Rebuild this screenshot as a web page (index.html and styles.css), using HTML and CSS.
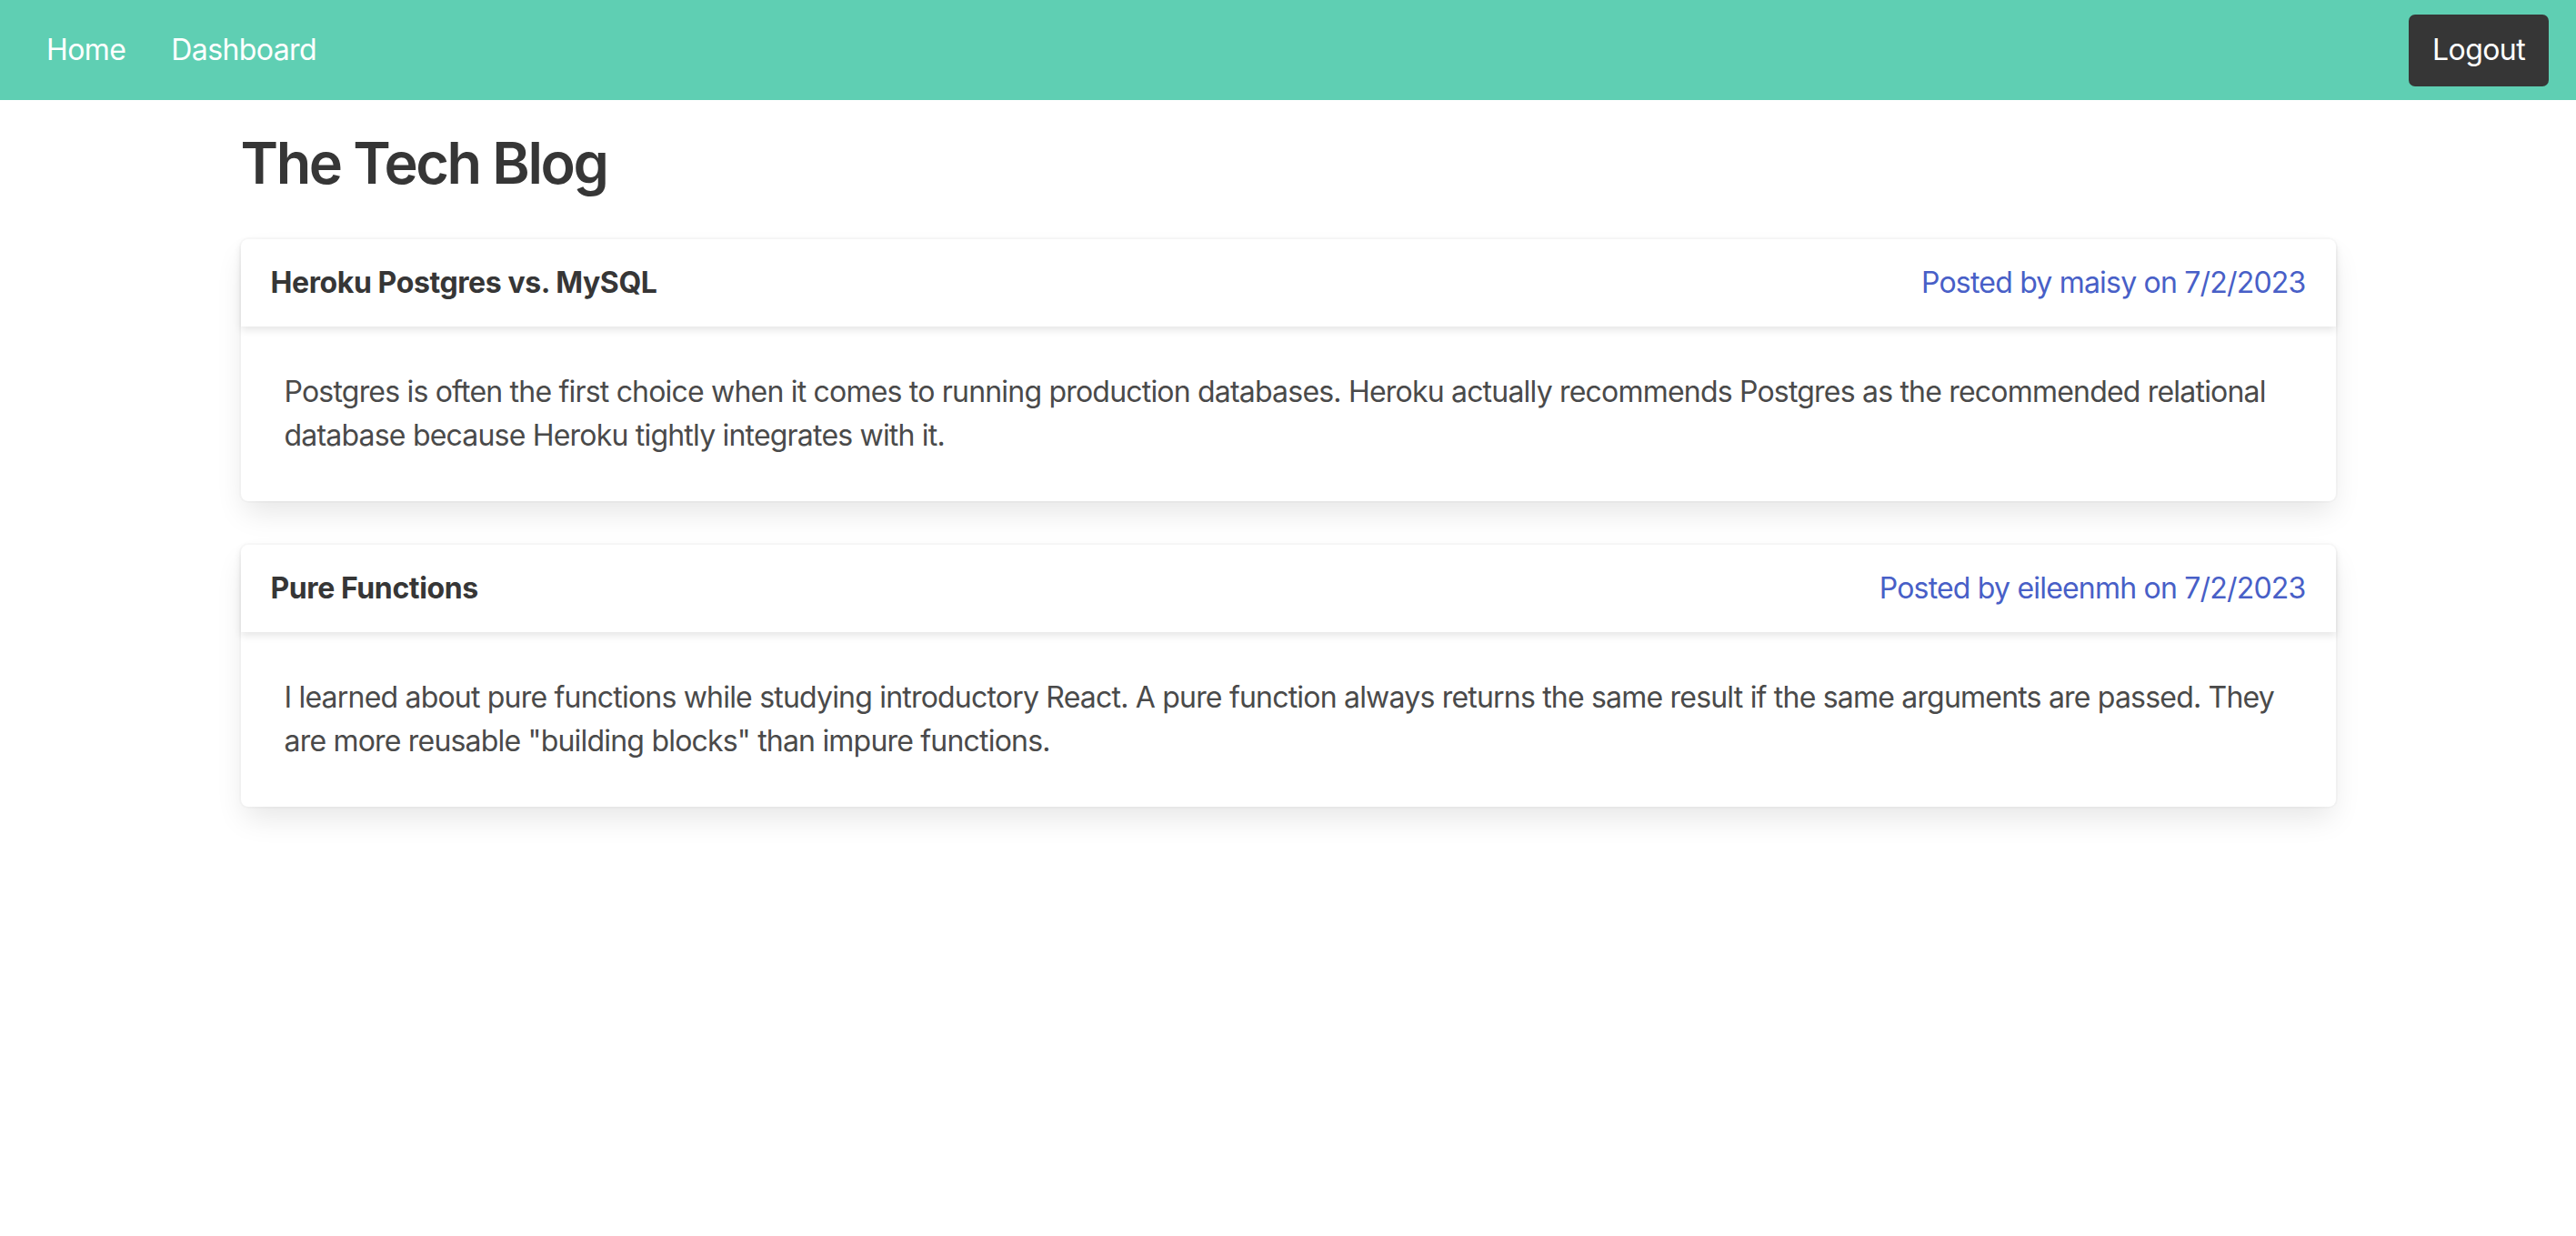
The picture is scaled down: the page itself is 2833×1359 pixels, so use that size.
FILE: index.html
```html
<!DOCTYPE html>
<html lang="en">
<head>
<meta charset="utf-8">
<title>The Tech Blog</title>
<link rel="stylesheet" href="styles.css">
</head>
<body>
<nav class="navbar">
  <div class="nav-start">
    <a class="nav-item" href="#">Home</a>
    <a class="nav-item" href="#">Dashboard</a>
  </div>
  <div class="nav-end">
    <button class="btn-dark" type="button">Logout</button>
  </div>
</nav>
<main class="container">
  <h1 class="title">The Tech Blog</h1>
  <article class="card">
    <header class="card-header">
      <p class="card-title">Heroku Postgres vs. MySQL</p>
      <p class="card-meta">Posted by maisy on 7/2/2023</p>
    </header>
    <div class="card-content">
      <p>Postgres is often the first choice when it comes to running production databases. Heroku actually recommends Postgres as the recommended relational database because Heroku tightly integrates with it.</p>
    </div>
  </article>
  <article class="card">
    <header class="card-header">
      <p class="card-title">Pure Functions</p>
      <p class="card-meta">Posted by eileenmh on 7/2/2023</p>
    </header>
    <div class="card-content">
      <p>I learned about pure functions while studying introductory React. A pure function always returns the same result if the same arguments are passed. They are more reusable "building blocks" than impure functions.</p>
    </div>
  </article>
</main>
</body>
</html>
```

FILE: styles.css
```css
* { box-sizing: border-box; }
html, body { margin: 0; padding: 0; }
body {
  font-family: Inter, "Noto Sans", "Liberation Sans", sans-serif;
  font-size: 32px;
  line-height: 1.5;
  color: #4a4a4a;
  background: #ffffff;
}
p { margin: 0; }

.navbar {
  height: 110px;
  background: #5fcfb3;
  display: flex;
  align-items: center;
  justify-content: space-between;
  padding: 0 30px 0 51px;
}
.nav-start { display: flex; align-items: center; }
.nav-item {
  color: #ffffff;
  text-decoration: none;
  padding: 0 25px;
  font-size: 32px;
  letter-spacing: -0.6px;
}
.nav-item:first-child { padding-left: 0; }
.btn-dark {
  font-family: inherit;
  font-size: 32px;
  letter-spacing: -0.6px;
  color: #ffffff;
  background: #363636;
  border: 2px solid transparent;
  border-radius: 7px;
  height: 79px;
  padding: 0 24px;
  line-height: 1;
  cursor: pointer;
}

.container {
  width: 2304px;
  margin: 0 auto;
  padding-top: 34px;
}
.title {
  margin: 0 0 48px;
  font-size: 63px;
  font-weight: 600;
  line-height: 1.125;
  color: #363636;
  letter-spacing: -2.4px;
}
.card {
  background: #ffffff;
  border-radius: 8px;
  box-shadow: 0 16px 32px -4px rgba(10, 10, 10, 0.1), 0 0 0 2px rgba(10, 10, 10, 0.02);
  margin-bottom: 48px;
}
.card-header {
  display: flex;
  align-items: center;
  justify-content: space-between;
  padding: 24px 33px;
  border-radius: 8px 8px 0 0;
  box-shadow: 0 4px 8px rgba(10, 10, 10, 0.1);
}
.card-title {
  font-weight: 700;
  color: #363636;
  letter-spacing: -0.4px;
}
.card-meta {
  color: #485fc7;
  letter-spacing: -0.8px;
}
.card-content {
  padding: 48px;
  letter-spacing: -0.8px;
}
```
